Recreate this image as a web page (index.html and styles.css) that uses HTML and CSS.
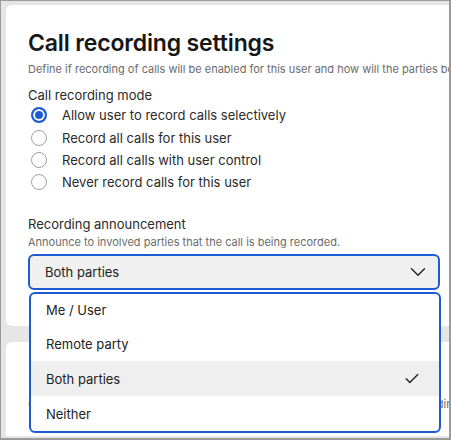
FILE: index.html
```html
<!DOCTYPE html>
<html lang="en">
<head>
    <meta charset="UTF-8">
    <meta name="viewport" content="width=device-width, initial-scale=1.0">
    <title>Call recording settings</title>
    <link rel="stylesheet" href="styles.css">
</head>
<body>
    <div class="frame">
        <div class="card">
            <h1>Call recording settings</h1>
            <p class="hint">Define if recording of calls will be enabled for this user and how will the parties be notified.</p>

            <div class="label">Call recording mode</div>
            <div class="radios">
                <div class="radio"><span class="dot checked"></span>Allow user to record calls selectively</div>
                <div class="radio"><span class="dot"></span>Record all calls for this user</div>
                <div class="radio"><span class="dot"></span>Record all calls with user control</div>
                <div class="radio"><span class="dot"></span>Never record calls for this user</div>
            </div>

            <div class="label section">Recording announcement</div>
            <p class="hint small">Announce to involved parties that the call is being recorded.</p>
            <div class="select">
                <span>Both parties</span>
                <svg width="16" height="10" viewBox="0 0 16 10"><path d="M1.5 1.8 8 8.2 14.5 1.8" fill="none" stroke="#222" stroke-width="1.4" stroke-linecap="round" stroke-linejoin="round"/></svg>
            </div>
        </div>

        <div class="card second">
            <p class="hint tail">Choose how the recording files are stored and which platform is used for recording, retention in</p>
        </div>

        <!-- opened dropdown -->
        <ul class="menu">
            <li class="first">Me / User</li>
            <li>Remote party</li>
            <li class="active">Both parties
                <svg width="14" height="11" viewBox="0 0 14 11"><path d="M1.2 5.8 4.8 9.4 12.8 1.4" fill="none" stroke="#222" stroke-width="1.4" stroke-linecap="round" stroke-linejoin="round"/></svg>
            </li>
            <li>Neither</li>
        </ul>
    </div>
</body>
</html>
```

FILE: styles.css
```css
body {
    margin: 0;
    font-family: Inter, "Noto Sans", sans-serif;
    color: #1c1c1c;
}
.frame {
    position: relative;
    width: 451px;
    height: 440px;
    box-sizing: border-box;
    border: 1px solid #9a9a9a;
    border-right-width: 2px;
    border-bottom-width: 2px;
    background-color: #e6e6e6;
    padding: 4px 0 0 5px;
    overflow: hidden;
}
.card {
    background-color: #fff;
    border-radius: 6px 0 0 6px;
    padding: 24px 0 36px 22px;
    white-space: nowrap;
    overflow: hidden;
}
h1 {
    font-size: 23px;
    font-weight: 600;
    margin: 0;
    line-height: 28px;
    color: #161616;
    letter-spacing: -0.15px;
}
.hint {
    font-size: 11px;
    color: #6b6b6b;
    margin: 4px 0 0;
    line-height: 16px;
}
.label {
    font-size: 13px;
    margin-top: 9px;
    line-height: 18px;
    color: #2a2a2a;
}
.label.section {
    margin-top: 21px;
}
.hint.small {
    margin-top: 1px;
}
.radio {
    display: flex;
    align-items: center;
    height: 22.4px;
    font-size: 13px;
    color: #2a2a2a;
}
.dot {
    width: 16px;
    height: 16px;
    box-sizing: border-box;
    border: 1.5px solid #a0a0a0;
    border-radius: 50%;
    margin: 0 15px 0 3px;
    background-color: #fff;
}
.dot.checked {
    border: 2px solid #1d5bd6;
    box-shadow: inset 0 0 0 2px #fff;
    background-color: #1d5bd6;
}
.select {
    margin-top: 4px;
    width: 412px;
    height: 36px;
    box-sizing: border-box;
    border: 2px solid #1d5bd6;
    border-radius: 6px;
    background-color: #f0f0f0;
    display: flex;
    align-items: center;
    justify-content: space-between;
    padding: 0 12px 0 15px;
    font-size: 13px;
    color: #222;
}
.card.second {
    margin-top: 16px;
    border-radius: 6px 0 0 0;
    height: 94px;
    box-sizing: border-box;
    padding: 54px 0 0 22px;
}
.hint.tail {
    margin: 0;
}
.menu {
    position: absolute;
    left: 28px;
    top: 291px;
    width: 412px;
    box-sizing: border-box;
    margin: 0;
    padding: 0;
    list-style: none;
    background-color: #fff;
    border: 2px solid #1d5bd6;
    border-radius: 6px;
    overflow: hidden;
}
.menu li {
    height: 35px;
    display: flex;
    align-items: center;
    justify-content: space-between;
    padding: 0 20px 0 15px;
    font-size: 13px;
    color: #222;
}
.menu li.first {
    height: 32px;
}
.menu li.active {
    background-color: #efefef;
}
```
